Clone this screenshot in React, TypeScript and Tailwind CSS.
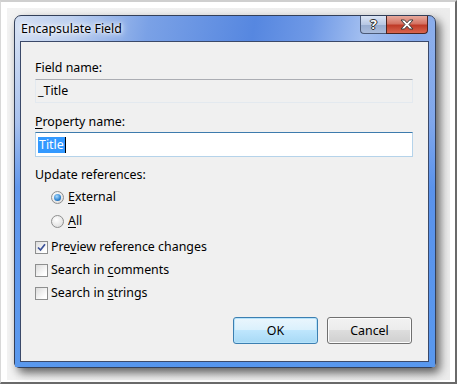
import React from "react";

const font = { fontFamily: '"Segoe UI", "Noto Sans", "Open Sans", sans-serif' };

function Key({ children }: { children: React.ReactNode }) {
  return <span className="underline underline-offset-2 decoration-1">{children}</span>;
}

function Radio({ checked }: { checked?: boolean }) {
  return (
    <span className="flex h-[13px] w-[13px] items-center justify-center rounded-full border border-[#8e8f8f] bg-[radial-gradient(circle_at_40%_35%,#ffffff,#e3e3e3_70%,#cfcfcf)]">
      {checked && (
        <span className="h-[7px] w-[7px] rounded-full bg-[radial-gradient(circle_at_40%_35%,#a9dbff,#2d82cf_60%,#17487e)]" />
      )}
    </span>
  );
}

function Check({ checked }: { checked?: boolean }) {
  return (
    <span className="flex h-[13px] w-[13px] items-center justify-center border border-[#8e8f8f] bg-[linear-gradient(135deg,#dcdcdc,#ffffff_80%)]">
      {checked && (
        <svg width="9" height="9" viewBox="0 0 9 9">
          <path d="M1 4.5 L3.5 7 L8 1.2" fill="none" stroke="#3b5199" strokeWidth="1.7" />
        </svg>
      )}
    </span>
  );
}

function TitleButtons() {
  return (
    <div className="flex h-[18px]">
      <div className="flex w-[26px] items-center justify-center rounded-bl-[4px] border border-t-0 border-r-0 border-[#4b5a78] bg-[linear-gradient(#dbe5f5,#b8c8e4_50%,#97acd0_51%,#aabcdc)]">
        <span
          className="text-[13px] font-bold leading-none text-white"
          style={{ ...font, textShadow: "0 0 1px #222, 1px 0 0 #333, -1px 0 0 #333, 0 1px 0 #333, 0 -1px 0 #333" }}
        >
          ?
        </span>
      </div>
      <div className="flex w-[42px] items-center justify-center rounded-br-[4px] border border-t-0 border-[#4b2420] bg-[linear-gradient(#e8aa9d,#d47363_45%,#bf3b28_55%,#d9654e)]">
        <svg width="14" height="11" viewBox="0 0 14 11">
          <path
            d="M1 1 H4.5 L7 3.8 L9.5 1 H13 L9 5.5 L13 10 H9.5 L7 7.2 L4.5 10 H1 L5 5.5 Z"
            fill="#ffffff"
            stroke="#3a3a3a"
            strokeWidth="1"
            strokeLinejoin="round"
          />
        </svg>
      </div>
    </div>
  );
}

export default function App() {
  return (
    <div className="h-[388px] w-[460px] bg-white" style={font}>
      <div className="h-[384px] w-[457px] border-t-2 border-l border-r-2 border-b-2 border-t-[#cfcfcf] border-l-[#d8d8d8] border-r-[#6a6a6a] border-b-[#6a6a6a] bg-white p-[6px]">
        <div className="h-[372px] w-[443px] bg-[linear-gradient(90deg,#f3f3f3,#ececec)] pl-[7px] pt-[7px]">
          {/* window */}
          <div className="flex h-[353px] w-[422px] flex-col rounded-t-[7px] rounded-b-[5px] border border-[#33405a] bg-[linear-gradient(100deg,#d3dff3_0%,#bccfef_12%,#7aa1e6_28%,#5687e0_50%,#6f99e6_62%,#a3bff0_73%,#85a9ea_84%,#a0bff1_100%)] shadow-[4px_5px_10px_rgba(0,0,0,0.6)]">
            <div className="flex h-[25px] shrink-0 justify-between pl-[6px] pr-[7px]">
              <span
                className="pt-[4px] text-[12.4px] text-black"
                style={{ textShadow: "0 0 6px #fff, 0 0 10px #fff, 0 0 3px #fff" }}
              >
                Encapsulate Field
              </span>
              <TitleButtons />
            </div>
            <div className="flex flex-1 pb-[5px] pl-[5px] pr-[6px] bg-[linear-gradient(180deg,transparent_0%,rgba(90,140,230,0.3)_25%,rgba(80,140,235,0.85)_45%,rgba(85,150,238,0.95))]">
              <div className="flex flex-1 flex-col border border-[#3b4969] bg-[#f0f0f0] pl-[14px] pr-[15px] pt-[18px] text-[12.4px] leading-[16px] text-black">
                <div>Field name:</div>
                <div className="mt-[3px] flex h-[24px] items-center border border-[#e3e9ef] border-t-[#abadb3] bg-[#f0f0f0] pl-[2px]">
                  _Title
                </div>
                <div className="mt-[11px]">
                  <Key>P</Key>roperty name:
                </div>
                <div className="mt-[2px] flex h-[25px] items-center border border-[#b5d3ea] border-t-[#3d7bad] bg-white pl-[2px]">
                  <span className="bg-[#3399ff] px-[1px] text-white">Title</span>
                  <span className="h-[16px] w-px bg-black" />
                </div>
                <div className="mt-[10px]">Update references:</div>
                <div className="mt-[6px] flex items-center gap-[4px] pl-[16px]">
                  <Radio checked />
                  <span>
                    <Key>E</Key>xternal
                  </span>
                </div>
                <div className="mt-[8px] flex items-center gap-[4px] pl-[16px]">
                  <Radio />
                  <span>
                    <Key>A</Key>ll
                  </span>
                </div>
                <div className="mt-[10px] flex items-center gap-[3px]">
                  <Check checked />
                  <span>
                    Pre<Key>v</Key>iew reference changes
                  </span>
                </div>
                <div className="mt-[7px] flex items-center gap-[3px]">
                  <Check />
                  <span>
                    Search in <Key>c</Key>omments
                  </span>
                </div>
                <div className="mt-[7px] flex items-center gap-[3px]">
                  <Check />
                  <span>
                    Search in <Key>s</Key>trings
                  </span>
                </div>
                <div className="mt-[16px] flex justify-end gap-[9px] pr-[1px]">
                  <button className="h-[27px] w-[85px] rounded-[3px] border border-[#3c7fb1] bg-[linear-gradient(#eaf6fd,#d9f0fc_50%,#bee6fd_50%,#a7d9f5)] shadow-[inset_0_0_0_1px_#b6e3fb] text-[12.4px] text-black">
                    OK
                  </button>
                  <button className="h-[27px] w-[85px] rounded-[3px] border border-[#707070] bg-[linear-gradient(#f2f2f2,#ebebeb_50%,#dddddd_50%,#cfcfcf)] shadow-[inset_0_0_0_1px_#fcfcfc] text-[12.4px] text-black">
                    Cancel
                  </button>
                </div>
              </div>
            </div>
          </div>
        </div>
      </div>
    </div>
  );
}
